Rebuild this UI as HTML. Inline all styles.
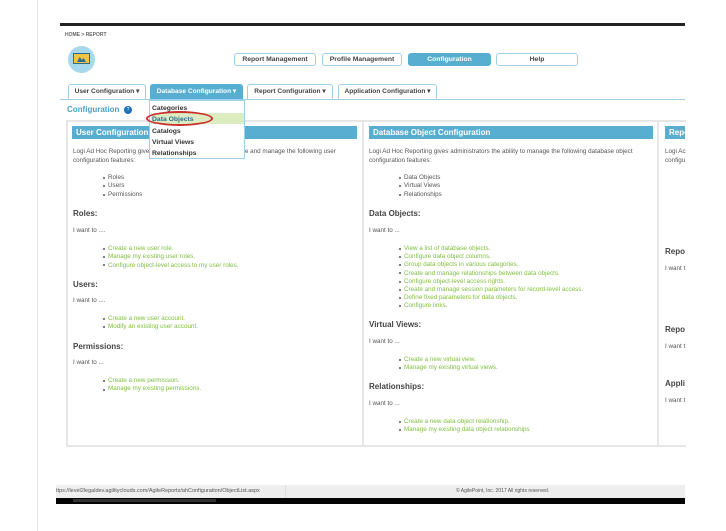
<!DOCTYPE html>
<html><head><meta charset="utf-8"><style>
*{margin:0;padding:0;box-sizing:border-box}
body{width:726px;height:531px;background:#fff;position:relative;overflow:hidden;font-family:"Liberation Sans",Arial,sans-serif;color:#555}
.a{position:absolute;white-space:nowrap}
.t{font-size:6.3px;color:#555}
.h{font-size:8px;font-weight:bold;color:#444}
.g{font-size:6.3px;color:#7fbf3f}
.btn{position:absolute;top:53px;height:13px;border:1px solid #9fd0e6;border-radius:3px;font-size:6.8px;font-weight:bold;color:#444;text-align:center;line-height:11px;background:#fff}
.tab{position:absolute;top:84px;height:16px;border:1px solid #9fd0e6;border-bottom:none;border-radius:3px 3px 0 0;font-size:6.6px;font-weight:bold;color:#444;text-align:center;line-height:14px;background:#fff}
.ph{position:absolute;top:126px;height:13px;background:#58aed0;color:#fff;font-size:8px;font-weight:bold;line-height:13px;padding-left:4px;white-space:nowrap;overflow:hidden}
.dot{position:absolute;width:2px;height:2px;border-radius:1px;background:#555}
</style></head><body>
<div class="a" style="left:37px;top:0;width:1px;height:531px;background:#e4e4e4"></div>
<div class="a" style="left:60px;top:23px;width:625px;height:3px;background:#222"></div>
<div class="a" style="left:65px;top:32px;font-size:5px;color:#666;font-weight:bold">HOME &gt; REPORT</div>
<div class="a" style="left:68px;top:46px;width:27px;height:27px;border-radius:50%;background:#a8d8ec"></div>
<div class="a" style="left:73px;top:53px;width:17px;height:11px;background:#f4c542;border:1px solid #2a6f8f"></div>
<div class="a" style="left:77px;top:57px;width:9px;height:5px;background:#2a6f8f;clip-path:polygon(0 100%,30% 0,55% 60%,75% 20%,100% 100%)"></div>
<div class="btn" style="left:234px;width:82px">Report Management</div>
<div class="btn" style="left:322px;width:80px">Profile Management</div>
<div class="btn" style="left:408px;width:83px;background:#58aed0;border-color:#58aed0;color:#fff">Configuration</div>
<div class="btn" style="left:496px;width:82px">Help</div>
<div class="tab" style="left:68px;width:78px">User Configuration &#9662;</div>
<div class="tab" style="left:150px;width:93px;background:#58aed0;border-color:#58aed0;color:#fff">Database Configuration &#9662;</div>
<div class="tab" style="left:247px;width:86px">Report Configuration &#9662;</div>
<div class="tab" style="left:338px;width:99px">Application Configuration &#9662;</div>
<div class="a" style="left:60px;top:99px;width:625px;height:1px;background:#9fd0e6"></div>
<div class="a" style="left:67px;top:105px;font-size:8px;color:#4aa0c8;font-weight:bold">Configuration</div>
<div class="a" style="left:124px;top:106px;width:8px;height:8px;border-radius:50%;background:#1f6fb8;color:#fff;font-size:5px;text-align:center;line-height:8px">?</div>

<div class="a" style="left:66px;top:120px;width:620px;height:327px;border:2px solid #e6e6e6;border-right:none"></div>
<div class="a" style="left:362px;top:120px;width:2px;height:327px;background:#e6e6e6"></div>
<div class="a" style="left:657px;top:120px;width:2px;height:327px;background:#e6e6e6"></div>
<div class="ph" style="left:72px;width:285px">User Configuration</div>
<div class="ph" style="left:369px;width:284px">Database Object Configuration</div>
<div class="ph" style="left:665px;width:20px">Repo</div>

<div class="a t" style="left:73px;top:147px;line-height:9px">Logi Ad Hoc Reporting gives administrators the ability to create and manage the following user<br>configuration features:</div>
<div class="a t" style="left:108px;top:174px;line-height:8.3px">Roles<br>Users<br>Permissions</div>
<div class="a h" style="left:73px;top:209px">Roles:</div>
<div class="a t" style="left:73px;top:227px">I want to ....</div>
<div class="a g" style="left:108px;top:245px;line-height:8.3px">Create a new user role.<br>Manage my existing user roles.<br>Configure object-level access to my user roles.</div>
<div class="a h" style="left:73px;top:280px">Users:</div>
<div class="a t" style="left:73px;top:297px">I want to ....</div>
<div class="a g" style="left:108px;top:315px;line-height:8.3px">Create a new user account.<br>Modify an existing user account.</div>
<div class="a h" style="left:73px;top:342px">Permissions:</div>
<div class="a t" style="left:73px;top:359px">I want to ...</div>
<div class="a g" style="left:108px;top:377px;line-height:8.3px">Create a new permission.<br>Manage my existing permissions.</div>

<div class="a t" style="left:369px;top:147px;line-height:9px">Logi Ad Hoc Reporting gives administrators the ability to manage the following database object<br>configuration features:</div>
<div class="a t" style="left:404px;top:174px;line-height:8.3px">Data Objects<br>Virtual Views<br>Relationships</div>
<div class="a h" style="left:369px;top:209px">Data Objects:</div>
<div class="a t" style="left:369px;top:227px">I want to ...</div>
<div class="a g" style="left:404px;top:245px;line-height:8.2px">View a list of database objects.<br>Configure data object columns.<br>Group data objects in various categories.<br>Create and manage relationships between data objects.<br>Configure object-level access rights.<br>Create and manage session parameters for record-level access.<br>Define fixed parameters for data objects.<br>Configure links.</div>
<div class="a h" style="left:369px;top:320px">Virtual Views:</div>
<div class="a t" style="left:369px;top:338px">I want to ...</div>
<div class="a g" style="left:404px;top:356px;line-height:8.3px">Create a new virtual view.<br>Manage my existing virtual views.</div>
<div class="a h" style="left:369px;top:382px">Relationships:</div>
<div class="a t" style="left:369px;top:400px">I want to ...</div>
<div class="a g" style="left:404px;top:418px;line-height:8.3px">Create a new data object relationship.<br>Manage my existing data object relationships</div>

<div class="a t" style="left:665px;top:147px;line-height:9px">Logi Ac<br>configu</div>
<div class="a h" style="left:665px;top:247px">Repo</div>
<div class="a t" style="left:665px;top:265px">I want t</div>
<div class="a h" style="left:665px;top:325px">Repo</div>
<div class="a t" style="left:665px;top:343px">I want t</div>
<div class="a h" style="left:665px;top:379px">Appli</div>
<div class="a t" style="left:665px;top:397px">I want t</div>
<div style="position:absolute;left:686px;top:120px;width:40px;height:330px;background:#fff"></div>

<div class="dot" style="left:103px;top:177px"></div><div class="dot" style="left:103px;top:185px"></div><div class="dot" style="left:103px;top:194px"></div>
<div class="dot" style="left:103px;top:248px"></div><div class="dot" style="left:103px;top:256px"></div><div class="dot" style="left:103px;top:264px"></div>
<div class="dot" style="left:103px;top:318px"></div><div class="dot" style="left:103px;top:326px"></div>
<div class="dot" style="left:103px;top:380px"></div><div class="dot" style="left:103px;top:389px"></div>
<div class="dot" style="left:399px;top:177px"></div><div class="dot" style="left:399px;top:185px"></div><div class="dot" style="left:399px;top:194px"></div>
<div class="dot" style="left:399px;top:248px"></div><div class="dot" style="left:399px;top:256px"></div><div class="dot" style="left:399px;top:264px"></div><div class="dot" style="left:399px;top:272px"></div><div class="dot" style="left:399px;top:281px"></div><div class="dot" style="left:399px;top:289px"></div><div class="dot" style="left:399px;top:297px"></div><div class="dot" style="left:399px;top:305px"></div>
<div class="dot" style="left:399px;top:359px"></div><div class="dot" style="left:399px;top:367px"></div>
<div class="dot" style="left:399px;top:421px"></div><div class="dot" style="left:399px;top:429px"></div>

<div class="a" style="left:149px;top:100px;width:96px;height:59px;background:#fff;border:1px solid #9fd0e6"></div>
<div class="a" style="left:151px;top:113px;width:93px;height:11px;background:#dcebc0"></div>
<div class="a" style="left:146px;top:111px;width:67px;height:15px;border:2px solid #c9302c;border-radius:50%"></div>
<div class="a" style="left:152px;top:103px;font-size:6.8px;font-weight:bold;color:#333;line-height:11.3px">Categories<br><span style="color:#2a6f8f">Data Objects</span><br>Catalogs<br>Virtual Views<br>Relationships</div>

<div class="a" style="left:56px;top:485px;width:629px;height:13px;background:#eeeeee"></div>
<div class="a" style="left:285px;top:485px;width:1px;height:13px;background:#ddd"></div>
<div class="a" style="left:56px;top:488px;font-size:5.5px;color:#555">ttps://level2legaldev.agilityclouds.com/AgileReports/ahConfiguration/ObjectList.aspx</div>
<div class="a" style="left:456px;top:488px;font-size:5px;color:#555">© AgilePoint, Inc. 2017 All rights reserved.</div>
<div class="a" style="left:56px;top:498px;width:629px;height:6px;background:#050505"></div>
<div class="a" style="left:73px;top:499px;width:143px;height:3px;background:#333"></div>
</body></html>
